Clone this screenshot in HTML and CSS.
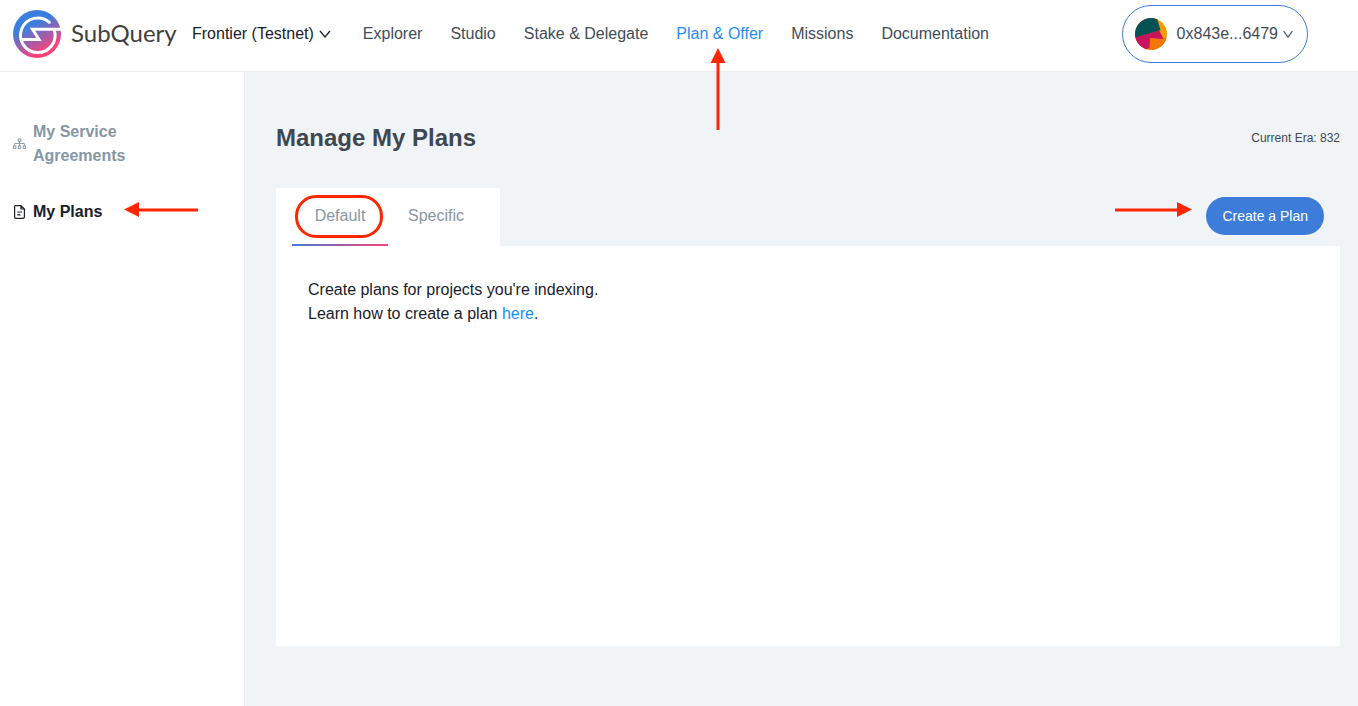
FILE: index.html
```html
<!DOCTYPE html>
<html lang="en">
<head>
<meta charset="utf-8">
<title>SubQuery - Manage My Plans</title>
<link rel="stylesheet" href="styles.css">
</head>
<body>
<header class="header">
  <a class="brand" href="#">
    <svg class="brand-mark" width="48" height="48" viewBox="0 0 48 48" aria-hidden="true">
      <defs>
        <linearGradient id="brand-fill" x1="0.3" y1="0.1" x2="0.7" y2="0.9">
          <stop offset="0.25" stop-color="#3a7fdf"/>
          <stop offset="0.95" stop-color="#ff4079"/>
        </linearGradient>
      </defs>
      <circle cx="24" cy="24" r="24" fill="url(#brand-fill)"/>
      <path d="M36.500 12.500A17.300 17.300 0 1 0 41.300 20M48 19.300H19.500L26 29.500H9" fill="none" stroke="#fff" stroke-width="3"/>
      <circle cx="36.300" cy="12.300" r="1.500" fill="#fff"/>
    </svg>
    <span class="brand-name">SubQuery</span>
  </a>
  <button class="network" type="button">Frontier (Testnet)
    <svg width="12" height="8" viewBox="0 0 12 8" aria-hidden="true"><path d="M1 1L6 7L11 1" fill="none" stroke="currentColor" stroke-width="1.3"/></svg>
  </button>
  <nav class="nav">
    <a href="#">Explorer</a>
    <a href="#">Studio</a>
    <a href="#">Stake &amp; Delegate</a>
    <a class="active" href="#">Plan &amp; Offer
      <svg class="arrow arrow-up" width="16" height="82" viewBox="0 0 16 82" aria-hidden="true"><path d="M8 14V82" stroke="#ff2600" stroke-width="3"/><path d="M8 0L15.500 15H0.500Z" fill="#ff2600"/></svg>
    </a>
    <a href="#">Missions</a>
    <a href="#">Documentation</a>
  </nav>
  <button class="account" type="button">
    <svg width="32" height="32" viewBox="0 0 32 32" aria-hidden="true">
      <defs><clipPath id="avatar-clip"><circle cx="16" cy="16" r="16"/></clipPath></defs>
      <g clip-path="url(#avatar-clip)">
        <path d="M0 0H32V32H0Z" fill="#f59a00"/>
        <path d="M15 19L32 20V32H14Z" fill="#f57505"/>
        <path d="M0 19L24 12L28.500 21L15 20L14.500 30L10 32H0Z" fill="#c7145c"/>
        <path d="M0 0H22L25.500 12L0 19.500Z" fill="#035356"/>
      </g>
    </svg>
    <span>0x843e...6479</span>
    <svg width="10" height="8" viewBox="0 0 10 8" aria-hidden="true"><path d="M0.500 1L5 7L9.500 1" fill="none" stroke="currentColor" stroke-width="1.2"/></svg>
  </button>
</header>
<div class="layout">
  <aside class="sidebar">
    <a class="side-link" href="#">
      <svg width="13" height="12" viewBox="0 0 13 12" fill="none" stroke="currentColor" stroke-width="0.9" aria-hidden="true"><rect x="5.200" y="0.900" width="2.600" height="2.600"/><path d="M6.500 3.500V8M1.700 8V5.500H11.300V8"/><rect x="0.500" y="8" width="2.400" height="2.400"/><rect x="5.300" y="8" width="2.400" height="2.400"/><rect x="10.100" y="8" width="2.400" height="2.400"/></svg>
      <span>My Service Agreements</span>
    </a>
    <a class="side-link current" href="#">
      <svg width="13" height="14" viewBox="0 0 13 14" fill="none" stroke="currentColor" stroke-width="1.2" aria-hidden="true"><path d="M2.500 0.700H8L11.400 4V12Q11.400 13.300 10 13.300H3Q1.600 13.300 1.600 12V1.600Q1.600 0.700 2.500 0.700ZM8 0.700V4H11.400M4.200 7H9M4.200 9.800H7.500"/></svg>
      <span>My Plans</span>
      <svg class="arrow arrow-left" width="74" height="16" viewBox="0 0 74 16" aria-hidden="true"><path d="M14 8H74" stroke="#ff2600" stroke-width="3"/><path d="M0 7.500L15 0V15Z" fill="#ff2600"/></svg>
    </a>
  </aside>
  <main class="main">
    <div class="title-row">
      <h1>Manage My Plans</h1>
      <span class="era">Current Era: 832</span>
    </div>
    <div class="toolbar">
      <div class="tabs" role="tablist">
        <button class="tab selected" type="button" role="tab" aria-selected="true">Default<span class="ring"></span></button>
        <button class="tab" type="button" role="tab" aria-selected="false">Specific</button>
      </div>
      <button class="create" type="button">Create a Plan
        <svg class="arrow arrow-right" width="77" height="16" viewBox="0 0 77 16" aria-hidden="true"><path d="M0 8H63" stroke="#ff2600" stroke-width="3"/><path d="M77 7.500L62 0V15Z" fill="#ff2600"/></svg>
      </button>
    </div>
    <section class="panel">
      <p>Create plans for projects you're indexing.</p>
      <p>Learn how to create a plan <a href="#">here</a>.</p>
    </section>
  </main>
</div>
</body>
</html>
```
FILE: styles.css
```css
* {
  box-sizing: border-box;
}

body {
  margin: 0;
  min-height: 100vh;
  display: flex;
  flex-direction: column;
  background: #fff;
  color: #1a202c;
  font: 16px/24px "Liberation Sans", Arial, sans-serif;
}

a {
  color: inherit;
  text-decoration: none;
}

button {
  border: 0;
  background: none;
  color: inherit;
  font: inherit;
  cursor: pointer;
}

.header {
  display: flex;
  align-items: center;
  padding: 5px 50px 8px 13px;
  border-bottom: 1px solid #eaecef;
}

.brand {
  display: flex;
  align-items: center;
  gap: 10px;
  width: 179px;
}

.brand-name {
  padding-bottom: 2px;
  color: #3f3f3f;
  font: 24px/32px Lato, sans-serif;
}

.network {
  display: flex;
  align-items: center;
  gap: 5px;
  padding: 0;
}

.nav {
  display: flex;
  gap: 28px;
  margin-left: 32px;
  color: #3f4d59;
}

.nav a {
  position: relative;
}

.nav .active {
  color: #1f8cf7;
}

.account {
  display: flex;
  align-items: center;
  gap: 10px;
  margin-left: auto;
  padding: 12px 14px 12px 12px;
  border: 1px solid #3d7dd9;
  border-radius: 29px;
  color: #3f4d59;
}

.account span {
  margin-right: -5px;
}

.layout {
  flex: 1;
  display: flex;
}

.sidebar {
  flex: none;
  width: 245px;
  padding: 48px 13px;
  border-right: 1px solid #eaecef;
}

.side-link {
  position: relative;
  display: flex;
  align-items: center;
  gap: 7px;
  width: 120px;
  margin-bottom: 32px;
  color: #8796a5;
  font-weight: bold;
}

.side-link > svg {
  flex: none;
}

.side-link.current {
  color: #1a202c;
}

.main {
  flex: 1;
  padding: 48px 18px 48px 31px;
  background: #f0f4f7;
}

.title-row {
  display: flex;
  align-items: center;
  justify-content: space-between;
  margin-bottom: 32px;
}

h1 {
  margin: 0;
  color: #3f4851;
  font-size: 24px;
  line-height: 36px;
}

.era {
  color: #3f4851;
  font-size: 12px;
}

.toolbar {
  display: flex;
  align-items: center;
  justify-content: space-between;
  padding-right: 16px;
}

.tabs {
  display: flex;
  padding: 0 16px;
  background: #fff;
}

.tab {
  position: relative;
  width: 96px;
  height: 58px;
  padding: 0 0 2px;
  color: #8796a5;
}

.tab.selected {
  background: linear-gradient(90deg, #3d7dd9, #ff4079) bottom / 100% 2px no-repeat;
}

.create {
  position: relative;
  margin-bottom: 2px;
  padding: 9px 16px;
  border-radius: 19px;
  background: #3d7dd9;
  color: #fff;
  font-size: 14px;
  line-height: 20px;
}

.panel {
  min-height: 400px;
  padding: 32px;
  background: #fff;
}

.panel p {
  margin: 0;
}

.panel a {
  color: #1890ff;
}

.arrow {
  position: absolute;
}

.arrow-up {
  top: 26px;
  left: 34px;
}

.arrow-left {
  top: 2px;
  left: 111px;
}

.arrow-right {
  top: 5px;
  right: 132px;
}

.ring {
  position: absolute;
  top: 7px;
  left: 3px;
  width: 88px;
  height: 43px;
  border: 3px solid #ff2600;
  border-radius: 21px;
}
```
